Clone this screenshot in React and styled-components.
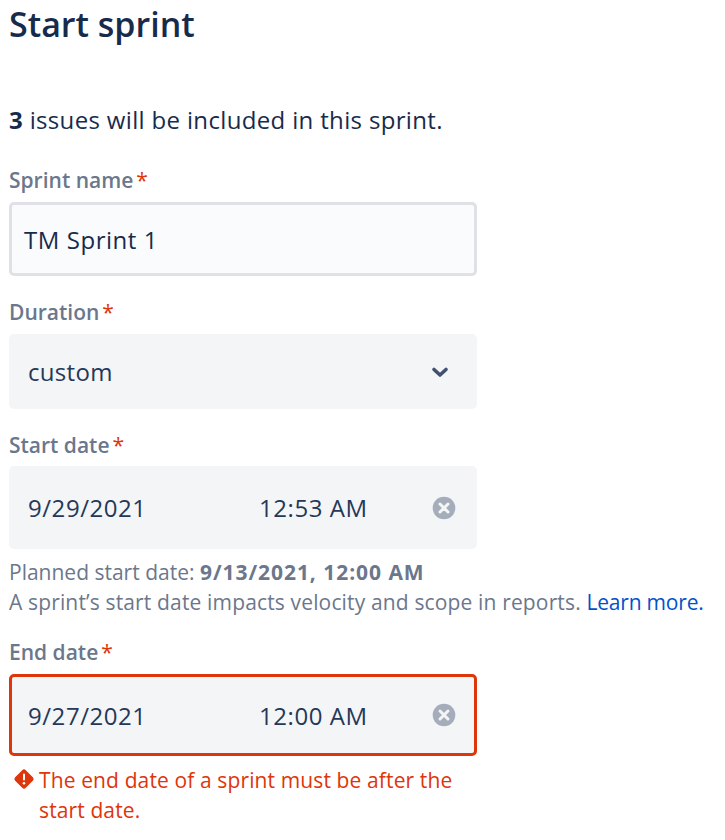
import React from 'react';
import styled, { createGlobalStyle } from 'styled-components';

const GlobalStyle = createGlobalStyle`
  html, body {
    margin: 0;
    padding: 0;
    background: #fff;
    font-family: "Open Sans", "Noto Sans", sans-serif;
  }
`;

function ClearIcon() {
  return (
    <IconSvg width="24" height="24" viewBox="0 0 24 24">
      <circle cx="12" cy="12" r="11.3" fill="#a5adba" />
      <path d="M8 8l8 8M16 8l-8 8" stroke="#f4f5f7" strokeWidth="3" strokeLinecap="round" />
    </IconSvg>
  );
}

function DateField({ date, time, invalid }) {
  return (
    <DateBox $invalid={invalid}>
      <DateText>{date}</DateText>
      <TimeText>{time}</TimeText>
      <ClearIcon />
    </DateBox>
  );
}

export default function App() {
  return (
    <Page>
      <GlobalStyle />
      <Title>Start sprint</Title>
      <Summary><b>3</b> issues will be included in this sprint.</Summary>

      <Label>Sprint name<Req>*</Req></Label>
      <NameInput>TM Sprint 1</NameInput>

      <Label>Duration<Req>*</Req></Label>
      <SelectBox>
        <span>custom</span>
        <IconSvg width="24" height="24" viewBox="0 0 24 24">
          <path d="M6 9.5l6 5.5 6-5.5" fill="none" stroke="#42526e" strokeWidth="3.6" strokeLinecap="round" strokeLinejoin="round" />
        </IconSvg>
      </SelectBox>

      <Label>Start date<Req>*</Req></Label>
      <DateField date="9/29/2021" time="12:53 AM" />
      <Help>
        <HelpLead>Planned start date: </HelpLead><HelpStrong>9/13/2021, 12:00 AM</HelpStrong><br />
        A sprint’s start date impacts velocity and scope in reports. <HelpLink>Learn more.</HelpLink>
      </Help>

      <Label>End date<Req>*</Req></Label>
      <DateField date="9/27/2021" time="12:00 AM" invalid />
      <ErrorRow>
        <ErrorIcon width="22" height="22" viewBox="0 0 22 22">
          <rect x="3.5" y="3.5" width="15" height="15" rx="2.5" transform="rotate(45 11 11)" fill="#de350b" />
          <rect x="10" y="5.5" width="2" height="7" rx="1" fill="#fff" />
          <circle cx="11" cy="15.2" r="1.3" fill="#fff" />
        </ErrorIcon>
        <ErrorText>The end date of a sprint must be after the start date.</ErrorText>
      </ErrorRow>
    </Page>
  );
}

const Page = styled.div`
  width: 725px;
  height: 840px;
  box-sizing: border-box;
  padding: 0 0 0 9px;
  overflow: hidden;
  color: #172b4d;
`;

const IconSvg = styled.svg`
  flex: none;
`;

const Title = styled.h1`
  margin: 2px 0 0;
  font-size: 34px;
  line-height: 44px;
  font-weight: 600;
  color: #172b4d;
`;

const Summary = styled.p`
  margin: 59px 0 31px;
  font-size: 24px;
  line-height: 30px;
  letter-spacing: 0.34px;
  color: #172b4d;
`;

const Label = styled.div`
  margin-top: 22px;
  font-size: 21px;
  line-height: 28px;
  font-weight: 600;
  color: #6b778c;
`;

const Req = styled.span`
  margin-left: 3px;
  font-weight: 400;
  color: #de350b;
`;

const NameInput = styled.div`
  width: 468px;
  height: 74px;
  margin-top: 8px;
  box-sizing: border-box;
  display: flex;
  align-items: center;
  padding: 0 12px;
  border: 3px solid #dfe1e6;
  border-radius: 5px;
  background: #fafbfc;
  font-size: 24px;
  letter-spacing: 0.55px;
  color: #172b4d;
`;

const SelectBox = styled.div`
  width: 468px;
  height: 75px;
  margin-top: 8px;
  box-sizing: border-box;
  display: flex;
  align-items: center;
  justify-content: space-between;
  padding: 0 25px 0 19px;
  border-radius: 5px;
  background: #f4f5f7;
  font-size: 24px;
  letter-spacing: 0.3px;
  color: #253858;
`;

const DateBox = styled.div`
  width: 468px;
  height: ${p => (p.$invalid ? '82px' : '83px')};
  margin-top: ${p => (p.$invalid ? '8px' : '7px')};
  box-sizing: border-box;
  display: flex;
  align-items: center;
  padding: 0 ${p => (p.$invalid ? '18px' : '21px')} 0 ${p => (p.$invalid ? '16px' : '19px')};
  border: ${p => (p.$invalid ? '3px solid #de350b' : 'none')};
  border-radius: 5px;
  background: #f4f5f7;
  font-size: 24px;
  letter-spacing: 0.55px;
  color: #253858;
`;

const DateText = styled.span`
  width: 231px;
`;

const TimeText = styled.span`
  flex: 1;
`;

const Help = styled.div`
  margin: 8px 0 -1px;
  font-size: 21px;
  line-height: 30px;
  letter-spacing: 0.15px;
  white-space: nowrap;
  color: #6b778c;
`;

const HelpLead = styled.span`
  letter-spacing: 0;
`;

const HelpStrong = styled.b`
  letter-spacing: 0.95px;
`;

const HelpLink = styled.span`
  letter-spacing: -0.2px;
  color: #0052cc;
`;

const ErrorRow = styled.div`
  display: flex;
  gap: 4px;
  width: 464px;
  margin: 9px 0 0 4px;
  align-items: flex-start;
`;

const ErrorIcon = styled.svg`
  flex: none;
  margin-top: 3px;
`;

const ErrorText = styled.div`
  font-size: 21px;
  line-height: 30px;
  letter-spacing: 0.12px;
  color: #de350b;
`;
